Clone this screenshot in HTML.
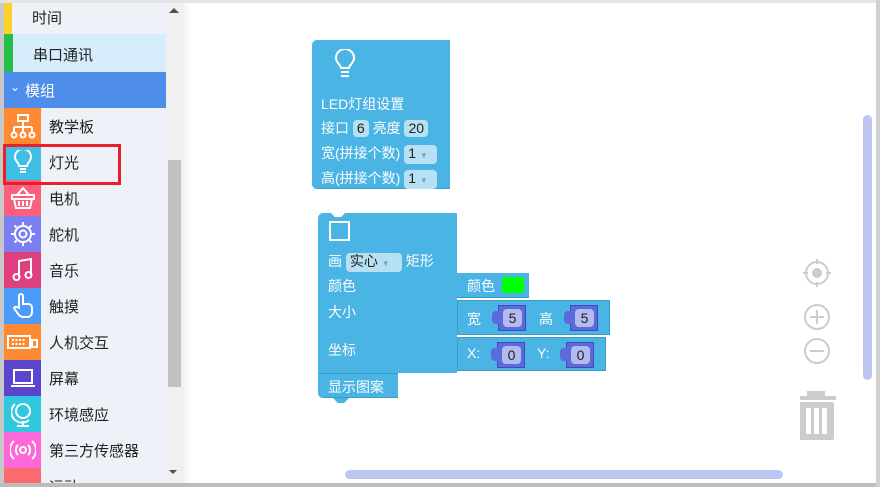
<!DOCTYPE html>
<html><head><meta charset="utf-8"><style>
*{margin:0;padding:0;box-sizing:border-box}
body{width:880px;height:487px;background:#fff;position:relative;overflow:hidden;font-family:"Liberation Sans","Noto Sans CJK SC",sans-serif}
.a{position:absolute}
.side{left:0;top:0;width:166px;height:484px;background:#eef2f8;overflow:hidden}
.it{position:absolute;left:4px;width:162px;height:36px;font-size:15px;color:#222}
.it .ic{position:absolute;left:0;top:0;width:37px;height:36px}
.it span{position:absolute;left:45px;top:8px}
.blk{background:#4ab4e4;color:#fff;font-size:14px}
.fld{display:inline-block;background:#b8e0f3;color:#222;border-radius:4px;padding:0 4px;font-size:14px;line-height:17px}
.num{position:absolute;background:#5b6bd9;border:1px solid #3d4cb8}
.num:before{content:"";position:absolute;left:-7px;top:5px;width:7px;height:13px;background:#5b6bd9;border-radius:4px 0 0 4px}
.num b{position:absolute;left:4px;top:3px;width:19px;height:18px;background:#b3baf0;border-radius:4px;color:#222;font-weight:normal;font-size:14px;text-align:center;line-height:18px}
</style></head><body>
<div class="a side">
 <div class="a" style="left:0;top:0;width:4px;height:484px;background:#c8c8c8"></div>
 <div class="it" style="top:0;height:34px;background:#eef2f8"><div class="ic" style="width:8px;background:#fcd02b"></div><span style="left:28px;top:7px">时间</span></div>
 <div class="it" style="top:34px;height:38px;background:#d6eefb"><div class="ic" style="width:9px;height:38px;background:#26bd4a"></div><span style="left:29px;top:10px">串口通讯</span></div>
 <div class="it" style="top:72px;background:#4f8dea;color:#fff"><span style="left:6px;top:8px;font-size:12px">⌄</span><span style="left:21px;top:8px;color:#fff">模组</span></div>
 <div class="it" style="top:108px"><div class="ic" style="background:#fd8a32"></div><svg class="a" style="left:6px;top:5px" width="26" height="26" fill="none" stroke="#fff" stroke-width="2"><rect x="8" y="2" width="10" height="6"/><path d="M13 8v6M4 14h18M4 14v5M13 14v5M22 14v5"/><circle cx="4" cy="22" r="2.5"/><circle cx="13" cy="22" r="2.5"/><circle cx="22" cy="22" r="2.5"/></svg><span>教学板</span></div>
 <div class="it" style="top:144px"><div class="ic" style="background:#3fbfe6"></div><svg class="a" style="left:8px;top:6px" width="22" height="24" fill="none" stroke="#fff" stroke-width="2"><path d="M7 16c0-3-4-5-4-9a8 8 0 0 1 16 0c0 4-4 6-4 9z"/><path d="M8 19h6M8 22h6"/></svg><span>灯光</span></div>
 <div class="it" style="top:180px"><div class="ic" style="background:#fa5f7e"></div><svg class="a" style="left:6px;top:6px" width="26" height="24" fill="none" stroke="#fff" stroke-width="2"><path d="M7 9l6-7 6 7M2 9h22v4H2zM4 13l2 9h14l2-9M9 15v5M13 15v5M17 15v5"/></svg><span>电机</span></div>
 <div class="it" style="top:216px"><div class="ic" style="background:#7b7ff2"></div><svg class="a" style="left:6px;top:5px" width="26" height="26" fill="none" stroke="#fff" stroke-width="2"><circle cx="13" cy="13" r="8"/><circle cx="13" cy="13" r="3.5"/><path d="M13 1v3M13 22v3M1 13h3M22 13h3M4.5 4.5l2 2M19.5 19.5l2 2M4.5 21.5l2-2M19.5 6.5l2-2"/></svg><span>舵机</span></div>
 <div class="it" style="top:252px"><div class="ic" style="background:#df3f7e"></div><svg class="a" style="left:8px;top:5px" width="22" height="26" fill="none" stroke="#fff" stroke-width="2"><path d="M7 20V4l12-2v16"/><circle cx="4.5" cy="20" r="3"/><circle cx="16.5" cy="18" r="3"/></svg><span>音乐</span></div>
 <div class="it" style="top:288px"><div class="ic" style="background:#4a9cf6"></div><svg class="a" style="left:8px;top:5px" width="22" height="26" fill="none" stroke="#fff" stroke-width="2"><path d="M7 15V3a2 2 0 0 1 4 0v8h5c3 0 4 2 4 4v4c0 3-2 5-5 5h-4c-3 0-5-3-7-6l-2-3c1-2 3-1 5 0z"/></svg><span>触摸</span></div>
 <div class="it" style="top:324px"><div class="ic" style="background:#fd8a32"></div><svg class="a" style="left:3px;top:10px" width="32" height="16" fill="none" stroke="#fff" stroke-width="2"><rect x="1" y="2" width="22" height="12"/><path d="M5 6h14M5 10h14" stroke-dasharray="2 1.5"/><rect x="25" y="6" width="5" height="7"/></svg><span>人机交互</span></div>
 <div class="it" style="top:360px"><div class="ic" style="background:#5a45cf"></div><svg class="a" style="left:6px;top:7px" width="26" height="22" fill="none" stroke="#fff" stroke-width="2"><rect x="4" y="3" width="18" height="13"/><path d="M1 19h24"/></svg><span>屏幕</span></div>
 <div class="it" style="top:396px"><div class="ic" style="background:#2fc8de"></div><svg class="a" style="left:7px;top:4px" width="24" height="28" fill="none" stroke="#fff" stroke-width="2"><circle cx="12" cy="11" r="7"/><path d="M4 4a10 10 0 0 0 14 16M12 21v4M6 26h12"/></svg><span>环境感应</span></div>
 <div class="it" style="top:432px"><div class="ic" style="background:#fd68d8"></div><svg class="a" style="left:6px;top:5px" width="26" height="26" fill="none" stroke="#fff" stroke-width="2"><circle cx="13" cy="13" r="3"/><path d="M8 8a7 7 0 0 0 0 10M18 8a7 7 0 0 1 0 10M4 4a12 12 0 0 0 0 18M22 4a12 12 0 0 1 0 18"/></svg><span>第三方传感器</span></div>
 <div class="it" style="top:468px"><div class="ic" style="background:#fb6a6f"></div><span>运动</span></div>
</div>
<div class="a" style="left:166px;top:0;width:15px;height:484px;background:#f0f0f0"></div>
<div class="a" style="left:168px;top:160px;width:13px;height:227px;background:#c1c1c1"></div>
<div class="a" style="left:169px;top:8px;width:0;height:0;border-left:5px solid transparent;border-right:5px solid transparent;border-bottom:5px solid #505050"></div>
<div class="a" style="left:169px;top:470px;width:0;height:0;border-left:4px solid transparent;border-right:4px solid transparent;border-top:4px solid #505050"></div>
<div class="a" style="left:181px;top:0;width:10px;height:484px;background:linear-gradient(90deg,#eee,#fff)"></div>
<div class="a" style="left:0;top:0;width:880px;height:3px;background:#e4e4e4"></div>
<div class="a" style="left:0;top:483px;width:880px;height:4px;background:#bcbcbc"></div>
<div class="a" style="left:876px;top:0;width:4px;height:487px;background:#d0d0d0"></div>
<div class="a" style="left:345px;top:470px;width:438px;height:9px;background:#bcc6f0;border-radius:5px"></div>
<div class="a" style="left:863px;top:115px;width:9px;height:265px;background:#bcc6f0;border-radius:5px"></div>
<svg class="a" style="left:800px;top:256px" width="36" height="200" fill="none" stroke="#ccc" stroke-width="2"><circle cx="17" cy="17" r="11"/><circle cx="17" cy="17" r="4" fill="#ccc"/><path d="M17 3v5M17 26v5M3 17h5M26 17h5"/><circle cx="17" cy="61" r="12"/><path d="M10 61h14M17 54v14"/><circle cx="17" cy="95" r="12"/><path d="M10 95h14"/><g fill="#ccc" stroke="none"><rect x="-6" y="140" width="44" height="4"/><rect x="7" y="135" width="18" height="7"/><rect x="-2" y="146" width="36" height="38" rx="2"/></g><g fill="#fff" stroke="none"><rect x="6" y="152" width="5" height="26"/><rect x="14" y="152" width="5" height="26"/><rect x="22" y="152" width="5" height="26"/></g></svg>
<div class="a blk" style="left:312px;top:40px;width:138px;height:149px;border-radius:5px 0 0 5px;border-bottom:1px solid #3c9cc8">
 <svg class="a" style="left:22px;top:9px" width="22" height="32" fill="none" stroke="#fff" stroke-width="2"><path d="M7 19c0-3-5-5-5-10a9 9 0 0 1 18 0c0 5-5 7-5 10z"/><path d="M7 23h8M7 27h8"/></svg>
 <div class="a" style="left:9px;top:54px">LED灯组设置</div>
 <div class="a" style="left:9px;top:78px">接口 <span class="fld">6</span> 亮度 <span class="fld">20</span></div>
 <div class="a" style="left:9px;top:103px">宽(拼接个数) <span class="fld" style="width:33px">1 <small style="font-size:8px;color:#6ab">▼</small></span></div>
 <div class="a" style="left:9px;top:128px">高(拼接个数) <span class="fld" style="width:33px">1 <small style="font-size:8px;color:#6ab">▼</small></span></div>
</div>
<div class="a blk" style="left:318px;top:213px;width:139px;height:160px;border-radius:5px 0 0 0">
 <div class="a" style="left:12px;top:-1px;width:16px;height:5px;background:#fff;clip-path:polygon(0 0,100% 0,70% 100%,30% 100%)"></div>
 <div class="a" style="left:11px;top:8px;width:21px;height:20px;border:2px solid #fff"></div>
 <div class="a" style="left:10px;top:38px">画 <span class="fld" style="width:56px">实心 <small style="font-size:8px;color:#6ab">▼</small></span> 矩形</div>
 <div class="a" style="left:10px;top:63px">颜色</div>
 <div class="a" style="left:10px;top:89px">大小</div>
 <div class="a" style="left:10px;top:127px">坐标</div>
</div>
<div class="a blk" style="left:457px;top:273px;width:72px;height:25px;border-bottom:1px solid #3c9cc8"><span class="a" style="left:10px;top:3px">颜色</span><div class="a" style="left:45px;top:4px;width:22px;height:16px;background:#00ff00;border-radius:3px"></div></div>
<div class="a blk" style="left:457px;top:300px;width:153px;height:35px;border:1px solid #3c9cc8"><span class="a" style="left:9px;top:8px">宽</span><span class="a" style="left:81px;top:8px">高</span>
 <div class="num" style="left:40px;top:4px;width:28px;height:26px"><b>5</b></div><div class="num" style="left:112px;top:4px;width:28px;height:26px"><b>5</b></div></div>
<div class="a blk" style="left:457px;top:337px;width:149px;height:34px;border:1px solid #3c9cc8"><span class="a" style="left:9px;top:7px">X:</span><span class="a" style="left:79px;top:7px">Y:</span>
 <div class="num" style="left:39px;top:4px;width:28px;height:26px"><b>0</b></div><div class="num" style="left:108px;top:4px;width:28px;height:26px"><b>0</b></div></div>
<div class="a blk" style="left:318px;top:373px;width:80px;height:25px;border-radius:0 0 0 5px;border-top:1px solid #3c9cc8;border-bottom:1px solid #3c9cc8"><span class="a" style="left:10px;top:3px">显示图案</span></div>
<div class="a" style="left:333px;top:398px;width:16px;height:5px;background:#4ab4e4;clip-path:polygon(0 0,100% 0,70% 100%,30% 100%)"></div>
<div class="a" style="left:3px;top:144px;width:118px;height:41px;border:3px solid #e8202a"></div>
</body></html>
